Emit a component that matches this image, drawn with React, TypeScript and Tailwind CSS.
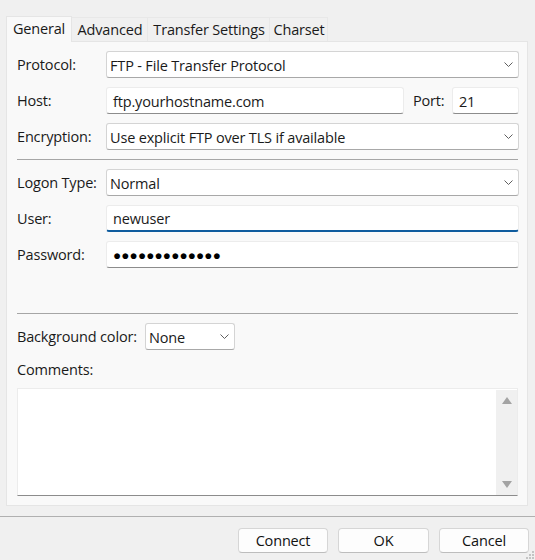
import React from "react";

const Chevron = () => (
  <svg width="9" height="5" viewBox="0 0 9 5" fill="none" stroke="#5f5f5f" strokeWidth="1" className="shrink-0">
    <path d="M0.5 0.5 L4.5 4.5 L8.5 0.5" />
  </svg>
);

const Select = ({ text, className = "" }: { text: string; className?: string }) => (
  <div className={`h-[27px] flex items-center justify-between pl-[3px] pr-[5px] bg-white border border-[#d4d4d4] border-b-[#a8a8a8] rounded-[3px] ${className}`}>
    <span className="pt-[3px]">{text}</span>
    <Chevron />
  </div>
);

const Input = ({ text, className = "", focused = false }: { text: string; className?: string; focused?: boolean }) => (
  <div className={`h-[27px] flex items-center pl-[6px] bg-white rounded-[3px] border border-[#ececec] ${focused ? "border-b-2 border-b-[#0f5c9e]" : "border-b-[#8c8c8c]"} ${className}`}>
    <span className="pt-[3px]">{text}</span>
  </div>
);

const Label = ({ text, className = "" }: { text: string; className?: string }) => (
  <span className={`pt-[2px] shrink-0 ${className}`}>{text}</span>
);

const Row = ({ label, children, className = "" }: { label: string; children: React.ReactNode; className?: string }) => (
  <div className={`flex items-center h-[27px] ${className}`}>
    <Label text={label} className="w-[89px]" />
    <div className="flex-1 min-w-0">{children}</div>
  </div>
);

const Tab = ({ text, active = false, className = "" }: { text: string; active?: boolean; className?: string }) => (
  <div className={active
    ? `h-[26px] flex items-center justify-center bg-[#f9f9f9] border border-[#e5e5e5] border-b-0 -mb-px relative z-10 ${className}`
    : `h-[24px] pt-[2px] pl-[1px] flex items-center justify-center bg-[#f0f0f0] border border-[#e8e8e8] border-b-0 border-l-0 ${className}`}>
    {text}
  </div>
);

const Button = ({ text, className = "" }: { text: string; className?: string }) => (
  <div className={`h-[25px] pt-[2px] flex items-center justify-center bg-[#fdfdfd] border border-[#d6d6d6] border-b-[#bdbdbd] rounded-[4px] text-[#111] ${className}`}>
    {text}
  </div>
);

const grip: [number, number][] = [
  [7, 1], [4, 4], [7, 4], [1, 7], [4, 7], [7, 7],
];

export default function App() {
  return (
    <div className="relative w-[535px] h-[560px] bg-[#f0f0f0] overflow-hidden flex flex-col text-[14.5px] leading-none text-[#1a1a1a] font-['Open_Sans','Noto_Sans',sans-serif] tracking-[-0.17px]">
      <div className="pt-[15px] pl-[6px] pr-[7px]">
        <div className="flex items-end h-[26px]">
          <Tab text="General" active className="w-[66px]" />
          <Tab text="Advanced" className="w-[76px]" />
          <Tab text="Transfer Settings" className="w-[122px]" />
          <Tab text="Charset" className="w-[58px]" />
        </div>
        <div className="h-[465px] bg-[#f9f9f9] border border-[#e5e5e5] pt-[9px] pl-[10px] pr-[8px] flex flex-col">
          <Row label="Protocol:"><Select text="FTP - File Transfer Protocol" /></Row>
          <Row label="Host:" className="mt-[9px]">
            <div className="flex items-center">
              <Input text="ftp.yourhostname.com" className="w-[298px]" />
              <Label text="Port:" className="ml-[9px] w-[39px]" />
              <Input text="21" className="flex-1" />
            </div>
          </Row>
          <Row label="Encryption:" className="mt-[9px]"><Select text="Use explicit FTP over TLS if available" /></Row>
          <div className="h-px bg-[#a6a6a6] mt-[9px] mr-[1px]" />
          <Row label="Logon Type:" className="mt-[9px]"><Select text="Normal" /></Row>
          <Row label="User:" className="mt-[9px]"><Input text="newuser" focused /></Row>
          <Row label="Password:" className="mt-[9px]">
            <Input text="●●●●●●●●●●●●●" className="text-[13.5px] tracking-[0.15px] text-black" />
          </Row>
          <div className="h-px bg-[#a6a6a6] mt-[45px] mr-[1px]" />
          <div className="flex items-center h-[27px] mt-[9px]">
            <Label text="Background color:" className="w-[128px]" />
            <Select text="None" className="w-[90px]" />
          </div>
          <div className="mt-[11px] h-[16px] pt-[2px] flex items-center">Comments:</div>
          <div className="mt-[11px] h-[108px] mr-[1px] bg-white border-b border-b-[#8c8c8c] border-x border-t border-x-[#ececec] border-t-[#ececec] flex justify-end">
            <div className="w-[21px] mt-[1px] bg-[#f0f0f0] flex flex-col items-center justify-between pt-[7px] pb-[7px]">
              <svg width="10" height="7" viewBox="0 0 10 7"><path d="M5 0 L10 7 L0 7 Z" fill="#a3a3a3" /></svg>
              <svg width="10" height="7" viewBox="0 0 10 7"><path d="M0 0 L10 0 L5 7 Z" fill="#a3a3a3" /></svg>
            </div>
          </div>
        </div>
      </div>
      <div className="h-px bg-[#b0b0b0] mt-[10px]" />
      <div className="flex justify-end gap-[10px] pr-[6px] mt-[11px]">
        <Button text="Connect" className="w-[90px]" />
        <Button text="OK" className="w-[91px]" />
        <Button text="Cancel" className="w-[90px]" />
      </div>
      <svg width="10" height="10" viewBox="0 0 10 10" className="absolute right-0 bottom-0">
        {grip.map(([x, y]) => (
          <rect key={`${x}-${y}`} x={x} y={y} width="2" height="2" fill="#c4c4c4" />
        ))}
      </svg>
    </div>
  );
}
